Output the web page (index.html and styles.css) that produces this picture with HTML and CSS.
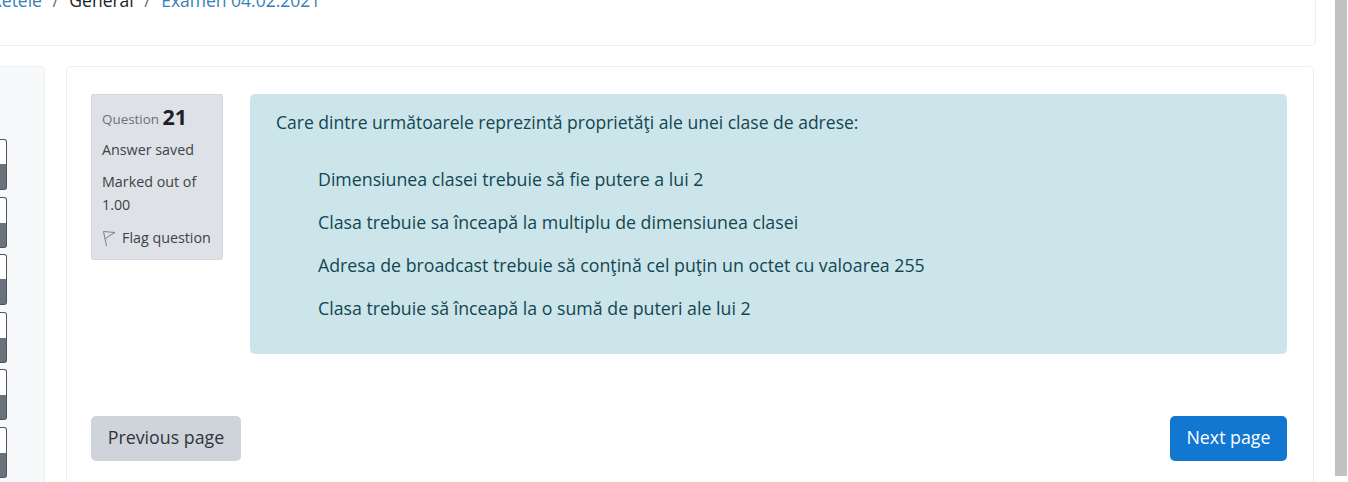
FILE: index.html
```html
<!DOCTYPE html>
<html lang="en">
<head>
    <meta charset="UTF-8">
    <meta name="viewport" content="width=device-width, initial-scale=1.0">
    <title>Examen 04.02.2021</title>
    <link rel="stylesheet" href="styles.css">
</head>
<body>
    <div class="page">
        <header class="top-card">
            <nav class="breadcrumb">
                <a href="#">Retele</a>
                <span class="sep">/</span>
                <span>General</span>
                <span class="sep">/</span>
                <a href="#">Examen 04.02.2021</a>
            </nav>
        </header>
        <div class="columns">
            <aside class="quiz-nav">
                <div class="nav-btn"></div>
                <div class="nav-btn"></div>
                <div class="nav-btn"></div>
                <div class="nav-btn"></div>
                <div class="nav-btn"></div>
                <div class="nav-btn"></div>
            </aside>
            <main class="main-card">
                <div class="question">
                    <div class="info">
                        <h3 class="q-no">Question <span class="q-num">21</span></h3>
                        <div class="info-line">Answer saved</div>
                        <div class="info-line marked">Marked out of 1.00</div>
                        <div class="flag">
                            <svg class="flag-icon" width="16" height="18" viewBox="0 0 16 18">
                                <path d="M4.5 17 L1.5 2.5 L13 3.5 L7 7 L3 10" fill="none" stroke="#7d8186" stroke-width="1"/>
                            </svg>
                            <span>Flag question</span>
                        </div>
                    </div>
                    <div class="content">
                        <p class="q-text">Care dintre următoarele reprezintă proprietăţi ale unei clase de adrese:</p>
                        <ul class="answers">
                            <li>Dimensiunea clasei trebuie să fie putere a lui 2</li>
                            <li>Clasa trebuie sa înceapă la multiplu de dimensiunea clasei</li>
                            <li>Adresa de broadcast trebuie să conţină cel puţin un octet cu valoarea 255</li>
                            <li>Clasa trebuie să înceapă la o sumă de puteri ale lui 2</li>
                        </ul>
                    </div>
                </div>
                <div class="actions">
                    <button class="btn btn-prev">Previous page</button>
                    <button class="btn btn-next">Next page</button>
                </div>
            </main>
        </div>
    </div>
    <div class="scrollbar"></div>
</body>
</html>
```

FILE: styles.css
```css
html, body {
    margin: 0;
    padding: 0;
    height: 482px;
    overflow: hidden;
    background-color: #fff;
}

body {
    display: flex;
    font-family: "Open Sans", "Noto Sans", sans-serif;
    color: #1d2125;
}

.page {
    width: 1335px;
    flex-shrink: 0;
    margin-top: -20px;
}

.top-card {
    height: 64px;
    margin-left: -30px;
    margin-right: 19px;
    padding-left: 20px;
    background-color: #fff;
    border: 1px solid #eceef0;
    border-radius: 5px;
}

.breadcrumb {
    display: flex;
    gap: 10.5px;
    font-size: 17.5px;
    line-height: 24px;
    margin-top: 7px;
    color: #1d2125;
}

.breadcrumb a {
    color: #3a7fb5;
    text-decoration: none;
}

.sep {
    color: #6a737b;
}

.columns {
    display: flex;
    gap: 21px;
    margin-top: 20px;
    margin-right: 21px;
}

.quiz-nav {
    width: 45px;
    height: 440px;
    flex-shrink: 0;
    padding-top: 72px;
    box-sizing: border-box;
    background-color: #f8f9fa;
    border: 1px solid #eceef0;
    border-left: none;
    border-radius: 0 5px 5px 0;
}

.nav-btn {
    width: 7px;
    height: 51px;
    margin-bottom: 6.6px;
    background: linear-gradient(#fff 50%, #6a737b 50%);
    border: 1px solid #4d5358;
    border-left: none;
    border-radius: 0 3px 3px 0;
    box-sizing: border-box;
}

.main-card {
    flex: 1;
    height: 440px;
    padding: 27px 26px 0 24px;
    box-sizing: border-box;
    background-color: #fff;
    border: 1px solid #eceef0;
    border-radius: 5px;
}

.question {
    display: flex;
    align-items: flex-start;
    gap: 27px;
}

.info {
    width: 132px;
    height: 166px;
    flex-shrink: 0;
    padding: 11px 10px;
    box-sizing: border-box;
    background-color: #dee2e6;
    border: 1px solid #d5d9dd;
    border-radius: 2px;
    font-size: 14.3px;
    color: #3d4349;
}

.q-no {
    margin: 0 0 11px;
    font-size: 13.4px;
    font-weight: 400;
    line-height: 27px;
    color: #6a7077;
}

.q-num {
    font-size: 21.5px;
    font-weight: 700;
    line-height: 1;
    color: #1d2125;
    vertical-align: -1px;
}

.info-line {
    line-height: 23px;
    margin-bottom: 9px;
}

.q-no + .info-line {
    margin-top: -6px;
}

.marked {
    margin-bottom: 11px;
}

.flag {
    display: flex;
    align-items: center;
    gap: 4px;
    line-height: 22px;
    white-space: nowrap;
}

.content {
    flex: 1;
    height: 260px;
    padding: 15px 26px;
    box-sizing: border-box;
    background-color: #cce5ea;
    border-radius: 5px;
    color: #134652;
    font-size: 17.55px;
}

.q-text {
    margin: 0 0 30px;
    line-height: 27px;
}

.answers {
    list-style: none;
    margin: 0;
    padding: 0 0 0 42px;
    font-size: 17.75px;
}

.answers li {
    line-height: 27px;
    margin-bottom: 16px;
}

.actions {
    display: flex;
    justify-content: space-between;
    margin-top: 62px;
}

.btn {
    height: 45px;
    padding: 0 0 3px;
    border: none;
    border-radius: 5px;
    font-family: inherit;
    font-size: 17.8px;
}

.btn-prev {
    width: 150px;
    background-color: #ced4da;
    color: #2f353a;
}

.btn-next {
    width: 117px;
    background-color: #1177d1;
    color: #fff;
}

.scrollbar {
    width: 12px;
    height: 476px;
    background-color: #c1c1c1;
}
```
